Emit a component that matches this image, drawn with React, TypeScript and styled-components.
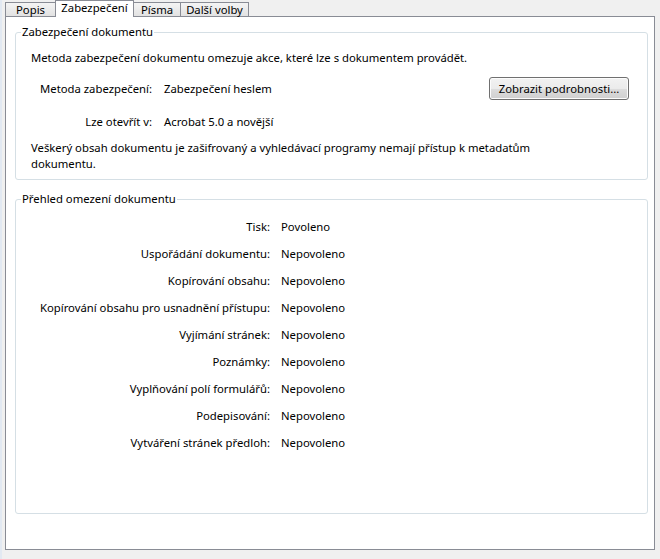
import React from 'react';
import styled, { createGlobalStyle } from 'styled-components';

const GlobalStyle = createGlobalStyle`
  html, body {
    margin: 0;
    padding: 0;
    background: #f0f0f0;
  }
  body {
    font-family: "Noto Sans", "Open Sans", sans-serif;
    font-size: 11.3px;
    line-height: 16px;
    color: #000;
  }
`;

const restrictions = [
  { label: 'Tisk:', value: 'Povoleno' },
  { label: 'Uspořádání dokumentu:', value: 'Nepovoleno' },
  { label: 'Kopírování obsahu:', value: 'Nepovoleno' },
  { label: 'Kopírování obsahu pro usnadnění přístupu:', value: 'Nepovoleno' },
  { label: 'Vyjímání stránek:', value: 'Nepovoleno' },
  { label: 'Poznámky:', value: 'Nepovoleno' },
  { label: 'Vyplňování polí formulářů:', value: 'Nepovoleno' },
  { label: 'Podepisování:', value: 'Nepovoleno' },
  { label: 'Vytváření stránek předloh:', value: 'Nepovoleno' },
];

const tabs = [
  { name: 'Popis', width: 51 },
  { name: 'Zabezpečení', width: 79 },
  { name: 'Písma', width: 48 },
  { name: 'Další volby', width: 69 },
];

const App = () => {
  return (
    <>
      <GlobalStyle />
      <Window>
        <TabStrip>
          {tabs.map(t => (
            <Tab key={t.name} $width={t.width} $active={t.name === 'Zabezpečení'}>
              {t.name}
            </Tab>
          ))}
        </TabStrip>
        <Panel>
          <Group $pt={10} $pb={7}>
            <Legend>Zabezpečení dokumentu</Legend>
            <Text>Metoda zabezpečení dokumentu omezuje akce, které lze s dokumentem provádět.</Text>
            <InfoGrid>
              <Label>Metoda zabezpečení:</Label>
              <Value>Zabezpečení heslem</Value>
              <Button type="button">Zobrazit podrobnosti...</Button>
              <Label>Lze otevřít v:</Label>
              <Value>Acrobat 5.0 a novější</Value>
              <span />
            </InfoGrid>
            <Text>
              Veškerý obsah dokumentu je zašifrovaný a vyhledávací programy nemají přístup k metadatům
              <br />
              dokumentu.
            </Text>
          </Group>
          <Group $pt={12} $pb={0} $grow>
            <Legend>Přehled omezení dokumentu</Legend>
            <SummaryGrid>
              {restrictions.map(r => (
                <React.Fragment key={r.label}>
                  <Label>{r.label}</Label>
                  <Value>{r.value}</Value>
                </React.Fragment>
              ))}
            </SummaryGrid>
          </Group>
        </Panel>
      </Window>
    </>
  );
};

const Window = styled.div`
  width: 660px;
  height: 559px;
  box-sizing: border-box;
  padding: 0 5px 9px 5px;
  display: flex;
  flex-direction: column;
  box-shadow: inset 2px 0 0 #e2e9f2;
`;

const TabStrip = styled.div`
  display: flex;
  align-items: flex-end;
  height: 16px;
  flex: none;
  position: relative;
  z-index: 1;
`;

const Tab = styled.div<{ $active?: boolean; $width: number }>`
  box-sizing: border-box;
  width: ${p => p.$width}px;
  height: ${p => (p.$active ? '17px' : '14px')};
  margin: 0 0 ${p => (p.$active ? '-1px' : '0')} -1px;
  border: 1px solid #898c95;
  border-bottom: none;
  background: ${p => (p.$active ? '#fff' : 'linear-gradient(#f4f4f4, #e2e2e2)')};
  line-height: 13px;
  text-align: center;
  position: relative;
  z-index: ${p => (p.$active ? 2 : 1)};
  white-space: nowrap;

  &:first-child {
    margin-left: 0;
  }
`;

const Panel = styled.div`
  flex: 1;
  box-sizing: border-box;
  border: 1px solid #898c95;
  background: #fff;
  padding: 7px 6px 35px 9px;
  display: flex;
  flex-direction: column;
  gap: 11px;
`;

const Group = styled.fieldset<{ $pt: number; $pb: number; $grow?: boolean }>`
  margin: 0;
  min-width: 0;
  border: 1px solid #d5dfe5;
  border-radius: 3px;
  padding: ${p => p.$pt}px 18px ${p => p.$pb}px 15px;
  flex: ${p => (p.$grow ? 1 : 'none')};
`;

const Legend = styled.legend`
  margin-left: -10px;
  padding: 0 1px;
  line-height: 16px;
`;

const Text = styled.p`
  margin: 0;
`;

const InfoGrid = styled.div`
  display: grid;
  grid-template-columns: 121px 1fr auto;
  column-gap: 12px;
  row-gap: 14px;
  align-items: center;
  margin: 11px 0 10px;
`;

const SummaryGrid = styled.div`
  display: grid;
  grid-template-columns: 239px 1fr;
  column-gap: 11px;
  row-gap: 11px;
`;

const Label = styled.span`
  text-align: right;
  white-space: nowrap;
`;

const Value = styled.span`
  white-space: nowrap;
`;

const Button = styled.button`
  font: inherit;
  color: #000;
  width: 140px;
  height: 23px;
  padding: 0;
  border: 1px solid #707070;
  border-radius: 3px;
  background: linear-gradient(#f2f2f2 0%, #ebebeb 50%, #dddddd 50%, #cfcfcf 100%);
  box-shadow: inset 0 0 0 1px #fcfcfc;
`;

export default App;
